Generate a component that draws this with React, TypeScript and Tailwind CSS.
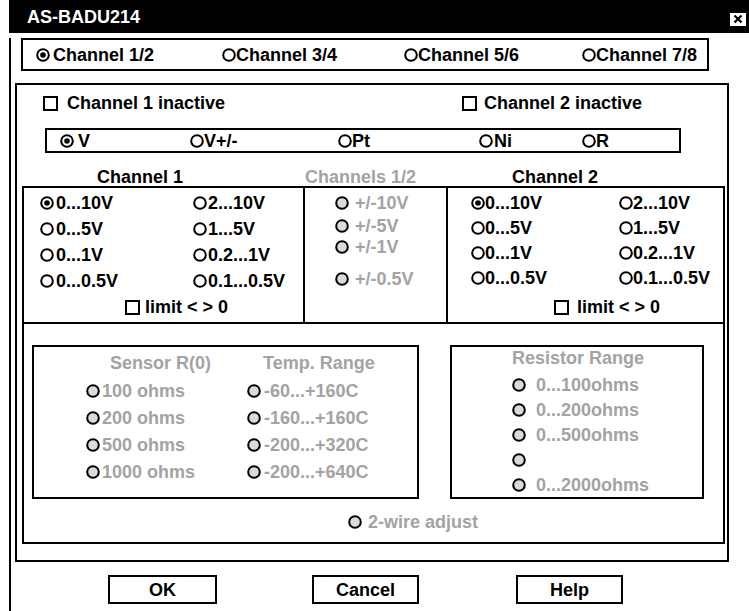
import clsx from "clsx"

const GRAY = "text-[#a3a3a3]"

function Radio({ on = false, gray = false }: { on?: boolean; gray?: boolean }) {
  return (
    <svg width="14" height="14" viewBox="0 0 14 14" className="h-[14px] w-[14px] shrink-0">
      <circle cx="7" cy="7" r="5.8" fill={gray ? "#dadada" : "#fff"} stroke="#000" strokeWidth="2" />
      {on && <circle cx="7" cy="7" r="2.8" fill="#000" />}
    </svg>
  )
}

function Option({ label, on, gray, className }: { label: string; on?: boolean; gray?: boolean; className?: string }) {
  return (
    <div className={clsx("flex items-center", className)}>
      <Radio on={on} gray={gray} />
      <span className={gray ? GRAY : undefined}>{label}</span>
    </div>
  )
}

function Check({ label, className }: { label: string; className?: string }) {
  return (
    <div className={clsx("flex items-center", className)}>
      <span className="block h-[15px] w-[15px] shrink-0 border-2 border-black" />
      <span>{label}</span>
    </div>
  )
}

const ch1 = [
  ["0...10V", "2...10V"],
  ["0...5V", "1...5V"],
  ["0...1V", "0.2...1V"],
  ["0...0.5V", "0.1...0.5V"],
]

export default function App() {
  return (
    <div className="h-[611px] w-[749px] overflow-hidden bg-white font-['Liberation_Sans',Arial,sans-serif] text-[18px] font-bold leading-none text-black">
      {/* title bar */}
      <div className="ml-[9px] flex h-[33px] items-center justify-between bg-black pl-[18px] pr-[3px]">
        <span className="text-white">AS-BADU214</span>
        <span className="mt-[5px] flex h-[13px] w-[16px] items-center justify-center bg-white">
          <svg width="12" height="10" viewBox="0 0 12 10">
            <path d="M2.5 1.5 L9.5 8.5 M9.5 1.5 L2.5 8.5" stroke="#000" strokeWidth="2.2" />
          </svg>
        </span>
      </div>

      <div className="ml-[9px] h-[578px] border-l-2 border-black">
        {/* channel pair selector */}
        <div className="ml-[10px] mt-[5px] flex h-[33px] w-[688px] items-center border-2 border-black pl-[13px]">
          <Option on label="Channel 1/2" className="w-[186px] gap-[3px]" />
          <Option label="Channel 3/4" className="w-[182px] gap-[0px]" />
          <Option label="Channel 5/6" className="w-[178px] gap-[0px]" />
          <Option label="Channel 7/8" className="gap-[0px]" />
        </div>

        {/* outer frame */}
        <div className="ml-[4px] mt-[12px] h-[479px] w-[714px] border-2 border-black">
          <div className="mt-[8px] flex h-[20px] items-center pl-[26px]">
            <Check label="Channel 1 inactive" className="w-[419px] gap-[9px]" />
            <Check label="Channel 2 inactive" className="gap-[7px]" />
          </div>

          {/* signal type */}
          <div className="ml-[28px] mt-[15px] flex h-[25px] w-[636px] items-center border-2 border-black pl-[13px]">
            <Option on label="V" className="w-[130px] gap-[4px]" />
            <Option label="V+/-" className="w-[148px] gap-[0px]" />
            <Option label="Pt" className="w-[141px] gap-[0px]" />
            <Option label="Ni" className="w-[103px] gap-[1px]" />
            <Option label="R" className="gap-[0px]" />
          </div>

          <div className="mt-[14px] flex h-[19px] items-center">
            <div className="w-[288px] pl-[80px]">Channel 1</div>
            <div className={clsx("w-[207px]", GRAY)}>Channels 1/2</div>
            <div>Channel 2</div>
          </div>

          {/* inner frame */}
          <div className="ml-[5px] flex h-[358px] w-[703px] flex-col border-2 border-black">
            <div className="flex h-[136px] border-b-2 border-black">
              <div className="w-[281px] border-r-2 border-black pl-[16px] pt-[2px]">
                {ch1.map(([a, b], i) => (
                  <div key={a} className="flex h-[26px] items-center">
                    <Option on={i === 0} label={a} className="w-[153px] gap-[2px]" />
                    <Option label={b} className="gap-[1px]" />
                  </div>
                ))}
                <div className="flex h-[26px] items-center pl-[85px]">
                  <Check label="limit < > 0" className="gap-[5px]" />
                </div>
              </div>

              <div className="flex w-[143px] flex-col border-r-2 border-black pl-[30px]">
                <Option gray label="+/-10V" className="mt-[5px] h-[20px] gap-[6px]" />
                <Option gray label="+/-5V" className="mt-[3px] h-[20px] gap-[6px]" />
                <Option gray label="+/-1V" className="mt-[1px] h-[20px] gap-[6px]" />
                <Option gray label="+/-0.5V" className="mt-[12px] h-[20px] gap-[6px]" />
              </div>

              <div className="flex-1 pl-[23px] pt-[2px]">
                {ch1.map(([a, b], i) => (
                  <div key={a} className="flex h-[25px] items-center">
                    <Option on={i === 0} label={a} className="w-[148px] gap-[0px]" />
                    <Option label={b} className="gap-[0px]" />
                  </div>
                ))}
                <div className="mt-[7px] flex h-[20px] items-center pl-[83px]">
                  <Check label="limit < > 0" className="gap-[8px]" />
                </div>
              </div>
            </div>

            {/* RTD / resistor settings */}
            <div className="flex flex-1 flex-col">
              <div className="mt-[21px] flex">
                <div className="ml-[8px] flex h-[154px] w-[387px] border-2 border-black pl-[52px] pt-[6px]">
                  <div className="flex w-[161px] flex-col">
                    <div className={clsx("h-[20px] pl-[24px] leading-[20px]", GRAY)}>Sensor R(0)</div>
                    <div className="mt-[4px]">
                      {["100 ohms", "200 ohms", "500 ohms", "1000 ohms"].map((t) => (
                        <Option key={t} gray label={t} className="h-[27px] gap-[2px]" />
                      ))}
                    </div>
                  </div>
                  <div className="flex flex-col">
                    <div className={clsx("h-[20px] pl-[16px] leading-[20px]", GRAY)}>Temp. Range</div>
                    <div className="mt-[4px]">
                      {["-60...+160C", "-160...+160C", "-200...+320C", "-200...+640C"].map((t) => (
                        <Option key={t} gray label={t} className="h-[27px] gap-[3px]" />
                      ))}
                    </div>
                  </div>
                </div>

                <div className="ml-[31px] h-[154px] w-[254px] border-2 border-black pl-[60px] pt-[1px]">
                  <div className={clsx("h-[20px] leading-[20px]", GRAY)}>Resistor Range</div>
                  <div className="mt-[4px]">
                    {["0...100ohms", "0...200ohms", "0...500ohms", "", "0...2000ohms"].map((t, i) => (
                      <Option key={i} gray label={t} className="h-[25px] gap-[10px]" />
                    ))}
                  </div>
                </div>
              </div>

              <div className="mt-[13px] flex h-[20px] items-center pl-[324px]">
                <Option gray label="2-wire adjust" className="gap-[6px]" />
              </div>
            </div>
          </div>
        </div>

        {/* dialog buttons */}
        <div className="mt-[13px] flex pl-[97px]">
          <button className="flex h-[29px] w-[109px] items-center justify-center border-2 border-black">OK</button>
          <button className="ml-[95px] flex h-[29px] w-[107px] items-center justify-center border-2 border-black">Cancel</button>
          <button className="ml-[97px] flex h-[29px] w-[107px] items-center justify-center border-2 border-black">Help</button>
        </div>
      </div>
    </div>
  )
}
